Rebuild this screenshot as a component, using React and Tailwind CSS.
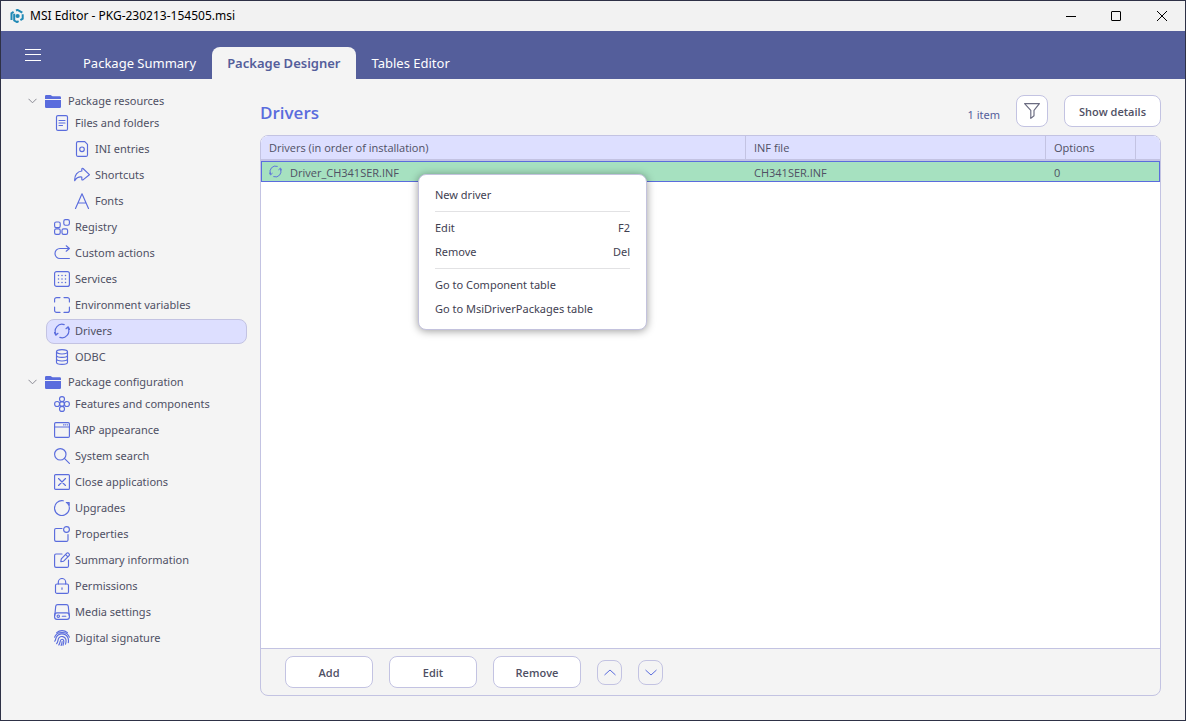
import React from "react";

function Svg({ children, className = "size-4 shrink-0" }) {
  return (
    <svg
      viewBox="0 0 16 16"
      fill="none"
      stroke="currentColor"
      strokeWidth="1.15"
      strokeLinecap="round"
      strokeLinejoin="round"
      className={className}
      aria-hidden="true"
    >
      {children}
    </svg>
  );
}

const SyncPaths = (
  <>
    <path d="M10.2 1.600A6.800 6.800 0 0 0 1.900 11M.5 9.600l1.300 2.600 2.200-1.900" />
    <path d="M5.800 14.400a6.800 6.800 0 0 0 8.300-9.400M12 5.700l2.200-1.900 1.300 2.600" />
  </>
);

const icons = {
  file: (
    <>
      <rect x="2.500" y=".6" width="11" height="14.800" rx="1.500" />
      <path d="M5 5.500h6M5 8h6M5 10.500h3.500" />
    </>
  ),
  ini: (
    <>
      <path d="M4 .6h6.800l2.700 2.700V14a1.500 1.500 0 0 1-1.500 1.400H4A1.500 1.500 0 0 1 2.500 14V2A1.500 1.500 0 0 1 4 .6Z" />
      <circle cx="8" cy="8.300" r="2.300" />
    </>
  ),
  shortcut: (
    <path d="M7.800 4V2.200Q7.800.900 9 1.500L15.400 7.700 9 12.900Q7.800 13.300 7.800 12.200V10C4.500 9.600 2.300 11 .7 13.700.3 8 3.500 4.300 7.800 4Z" />
  ),
  font: <path d="M1.500 15.500 8 .8l6.500 14.700M4.200 10h7.600" />,
  registry: (
    <>
      <rect x=".6" y="3" width="5.600" height="5.600" rx="1.600" />
      <rect x=".6" y="9.800" width="5.600" height="5.600" rx="1.600" />
      <rect x="8" y="9.800" width="5.600" height="5.600" rx="1.600" />
      <rect x="9.800" y=".6" width="5.600" height="5.600" rx="1.600" />
    </>
  ),
  action: <path d="M15.400 13.500H6A5 5 0 0 1 6 3.500h9.400M12.200.8l3.200 2.700-3.200 2.700" />,
  services: (
    <>
      <rect x=".6" y=".6" width="14.800" height="14.800" rx="2" />
      <g strokeWidth="1.500">
        <path d="M4.500 4.500h.01M8 4.500h.01M11.500 4.500h.01M4.500 8h.01M8 8h.01M11.500 8h.01M4.500 11.500h.01M8 11.500h.01M11.500 11.500h.01" />
      </g>
    </>
  ),
  env: (
    <path d="M.6 5V2.600a2 2 0 0 1 2-2H6M10 .6h3.400a2 2 0 0 1 2 2V5M15.400 10v3.400a2 2 0 0 1-2 2H10M6 15.400H2.600a2 2 0 0 1-2-2V10" />
  ),
  sync: SyncPaths,
  database: (
    <>
      <ellipse cx="8" cy="2.800" rx="5.500" ry="2.200" />
      <path d="M2.500 2.800v10.400c0 1.200 2.500 2.200 5.500 2.200s5.500-1 5.500-2.200V2.800M2.500 6.200c0 1.200 2.500 2.200 5.500 2.200s5.500-1 5.500-2.200M2.500 9.800c0 1.200 2.500 2.200 5.500 2.200s5.500-1 5.500-2.200" />
    </>
  ),
  features: (
    <>
      <circle cx="8" cy="3.100" r="2.500" />
      <circle cx="8" cy="12.900" r="2.500" />
      <circle cx="3.100" cy="8" r="2.500" />
      <circle cx="12.900" cy="8" r="2.500" />
      <circle cx="8" cy="8" r="2.400" />
    </>
  ),
  arp: (
    <>
      <rect x=".6" y=".6" width="14.800" height="14.800" rx="1.200" />
      <path d="M.6 5h14.800M9.500 2.800h.6M11.500 2.800h.3M13.300 2.800h.3" />
    </>
  ),
  search: (
    <>
      <circle cx="6.300" cy="6.300" r="5.700" />
      <path d="m10.400 10.400 5 5" />
    </>
  ),
  close: (
    <>
      <rect x=".6" y=".6" width="14.800" height="14.800" rx="1" />
      <path d="m4.500 4.500 7 7M11.500 4.500l-7 7" />
    </>
  ),
  upgrade: <path d="M9.300.8A7.400 7.400 0 1 0 13.500 3.200M12.300 2.600h2.900v3" />,
  properties: (
    <>
      <path d="M8 2.500H2A1.500 1.500 0 0 0 .6 4v10A1.500 1.500 0 0 0 2 15.400h10.500A1.500 1.500 0 0 0 14 14V8.500" />
      <circle cx="12.500" cy="3.500" r="2.900" />
    </>
  ),
  summary: (
    <>
      <path d="M8 2H2A1.500 1.500 0 0 0 .6 3.500V14A1.500 1.500 0 0 0 2 15.400h11a1.500 1.500 0 0 0 1.500-1.400V8" />
      <path d="m7.300 6.800 5.500-5.600a1.200 1.200 0 0 1 1.700 0l.6.700a1.200 1.200 0 0 1 0 1.700L9.700 9.200l-2.900.5ZM11.700 2.600l2.200 2.200" />
    </>
  ),
  lock: (
    <>
      <rect x="1.500" y="6" width="13" height="9.400" rx="1.500" />
      <path d="M4.300 6V4.200a3.700 3.700 0 0 1 7.400 0V6M8 9.700v1.600" />
    </>
  ),
  media: (
    <>
      <path d="M.8 11.500 1.700 2.400A2 2 0 0 1 3.700.6h8.600a2 2 0 0 1 2 1.800l.9 9.100" />
      <rect x=".6" y="8.800" width="14.800" height="6.600" rx="2.400" />
      <circle cx="4.300" cy="12.200" r="1.200" />
      <path d="M8.300 12.200h3.500" />
    </>
  ),
  fingerprint: (
    <path d="M2.700 2.600C5.800-.1 10.300-.1 13.400 2.600M.6 7.200c2-6.300 12.800-6.300 14.800 0M.8 11.200c1-1.200.8-2.700 1.500-4 2.300-4.500 9-4.500 11.400 0 .9 1.800 1 3.500.6 5.500M2.600 13.600c2-1.900.8-4.300 2.500-6 2-2 5.800-1.200 6.700 1.600.5 1.800.2 3.400-.3 5M4.800 15c2-2.300.7-5.800 3.200-5.800 2.600 0 1.900 3.800 1 6.100M7.100 15.500c.7-1.400 1-2.500 1-4" />
  ),
};

const resources = [
  { label: "Files and folders", icon: "file" },
  { label: "INI entries", icon: "ini", nested: true },
  { label: "Shortcuts", icon: "shortcut", nested: true },
  { label: "Fonts", icon: "font", nested: true },
  { label: "Registry", icon: "registry" },
  { label: "Custom actions", icon: "action" },
  { label: "Services", icon: "services" },
  { label: "Environment variables", icon: "env" },
  { label: "Drivers", icon: "sync", selected: true },
  { label: "ODBC", icon: "database" },
];

const configuration = [
  { label: "Features and components", icon: "features" },
  { label: "ARP appearance", icon: "arp" },
  { label: "System search", icon: "search" },
  { label: "Close applications", icon: "close" },
  { label: "Upgrades", icon: "upgrade" },
  { label: "Properties", icon: "properties" },
  { label: "Summary information", icon: "summary" },
  { label: "Permissions", icon: "lock" },
  { label: "Media settings", icon: "media" },
  { label: "Digital signature", icon: "fingerprint" },
];

function TreeGroup({ title, items }) {
  return (
    <section>
      <button type="button" className="flex h-[18px] items-center pl-[27px] text-left">
        <svg viewBox="0 0 9 6" fill="none" stroke="#8a8a94" className="h-[6px] w-[9px]" aria-hidden="true">
          <path d="m.5.8 4 4 4-4" />
        </svg>
        <svg viewBox="0 0 16 13" fill="#5a6cdd" className="mr-[7px] ml-2 h-[13px] w-4" aria-hidden="true">
          <path d="M0 4V1.200Q0 0 1.200 0H5.500L7.500 1.300H14.800Q16 1.300 16 2.500V4ZM0 5H16V11.800Q16 13 14.800 13H1.200Q0 13 0 11.800Z" />
        </svg>
        {title}
      </button>
      <ul className="flex flex-col gap-px pt-px pl-[45px]">
        {items.map((item) => (
          <li key={item.label}>
            <button
              type="button"
              className={
                "flex h-[25px] w-full items-center gap-[5px] rounded-lg border pb-px text-left " +
                (item.selected ? "border-[#c3c3e2] bg-[#dddfff] " : "border-transparent ") +
                (item.nested ? "pl-[27px]" : "pl-[7px]")
              }
            >
              <span className="text-[#5a6cdd]">
                <Svg>{icons[item.icon]}</Svg>
              </span>
              {item.label}
            </button>
          </li>
        ))}
      </ul>
    </section>
  );
}

function TitleBar() {
  return (
    <header className="flex h-[30px] shrink-0 items-center bg-[#f2f2f2] pl-[9px] text-[12px] text-black">
      <svg viewBox="0 0 14 14" fill="none" stroke="#2089b5" strokeWidth="2" className="mr-[6px] size-[14px]" aria-hidden="true">
        <path d="M1.500 11V4.200L3.600 2.800M6 1.500 7.500.900l4.800 2.700M12.700 5.200v4.500l-2.300 1.400M8.600 12.200l-1.600.9-2.800-1.600V4.800" />
        <circle cx="7.600" cy="7" r="2.100" fill="#2089b5" stroke="none" />
      </svg>
      <h1 className="flex-1">MSI Editor - PKG-230213-154505.msi</h1>
      <div className="flex text-black">
        <button type="button" aria-label="Minimize" className="flex h-[30px] w-[45px] items-center justify-center">
          <svg viewBox="0 0 10 10" stroke="currentColor" fill="none" className="size-[10px]">
            <path d="M0 5.500h10" />
          </svg>
        </button>
        <button type="button" aria-label="Maximize" className="flex h-[30px] w-[45px] items-center justify-center">
          <svg viewBox="0 0 10 10" stroke="currentColor" fill="none" className="size-[10px]">
            <rect x=".5" y=".5" width="9" height="9" rx=".5" />
          </svg>
        </button>
        <button type="button" aria-label="Close" className="flex h-[30px] w-[47px] items-center justify-center">
          <svg viewBox="0 0 10 10" stroke="currentColor" fill="none" className="size-[10px]">
            <path d="m0 0 10 10M10 0 0 10" />
          </svg>
        </button>
      </div>
    </header>
  );
}

function NavBar() {
  return (
    <nav className="flex h-12 shrink-0 items-end bg-[#545e9b] text-[13px] text-white">
      <button type="button" aria-label="Menu" className="flex h-12 w-16 items-center justify-center">
        <svg viewBox="0 0 16 12" stroke="white" className="h-3 w-4">
          <path d="M0 .5h16M0 5.500h16M0 11.500h16" />
        </svg>
      </button>
      <a href="#summary" className="flex h-8 items-center pt-0.5 pr-4 pl-[18px]">Package Summary</a>
      <a
        href="#designer"
        aria-current="page"
        className="flex h-8 items-center rounded-t-lg bg-[#f4f4f4] px-[15px] pt-0.5 font-semibold text-[#545e9b]"
      >
        Package Designer
      </a>
      <a href="#tables" className="flex h-8 items-center px-4 pt-0.5">Tables Editor</a>
    </nav>
  );
}

function MenuItem({ label, shortcut }) {
  return (
    <button type="button" role="menuitem" className="flex h-6 w-full items-center justify-between">
      <span>{label}</span>
      {shortcut && <span>{shortcut}</span>}
    </button>
  );
}

function ContextMenu() {
  return (
    <div
      role="menu"
      className="absolute top-[38px] left-[157px] w-[229px] rounded-lg border border-[#c3c2dd] bg-white px-4 py-2 text-[#3f4152] shadow-[0_1px_8px_rgba(0,0,0,0.4)]"
    >
      <MenuItem label="New driver" />
      <hr className="my-1 border-[#e2e2e4]" />
      <MenuItem label="Edit" shortcut="F2" />
      <MenuItem label="Remove" shortcut="Del" />
      <hr className="my-1 border-[#e2e2e4]" />
      <MenuItem label="Go to Component table" />
      <MenuItem label="Go to MsiDriverPackages table" />
    </div>
  );
}

function DriversTable() {
  return (
    <table className="w-full table-fixed border-separate border-spacing-0 text-left font-['Open_Sans',sans-serif]">
      <colgroup>
        <col />
        <col className="w-[300px]" />
        <col className="w-[90px]" />
        <col className="w-[24px]" />
      </colgroup>
      <thead>
        <tr className="h-[25px] bg-[#dddfff]">
          <th className="border-r border-b-2 border-[#c3c3e2] px-2 pt-0.5 font-medium">Drivers (in order of installation)</th>
          <th className="border-r border-b-2 border-[#c3c3e2] px-2 pt-0.5 font-medium">INF file</th>
          <th className="border-r border-b-2 border-[#c3c3e2] px-2 pt-0.5 font-medium">Options</th>
          <th className="border-b-2 border-[#c3c3e2]" aria-label="Spacer" />
        </tr>
      </thead>
      <tbody>
        <tr className="h-[21px] bg-[#a6e1c0] outline-1 -outline-offset-1 outline-[#5a6cdd]">
          <td className="px-2 pt-1">
            <div className="flex items-center gap-2">
              <span className="pb-1 text-[#5a6cdd]">
                <Svg className="size-[13px]">{SyncPaths}</Svg>
              </span>
              Driver_CH341SER.INF
            </div>
          </td>
          <td className="px-2 pt-1">CH341SER.INF</td>
          <td className="px-2 pt-1">0</td>
          <td />
        </tr>
      </tbody>
    </table>
  );
}

function ActionButton({ children }) {
  return (
    <button type="button" className="h-8 w-[88px] rounded-lg border border-[#c3c3e2] bg-white pt-0.5 font-semibold">
      {children}
    </button>
  );
}

function MoveButton({ label, d }) {
  return (
    <button
      type="button"
      aria-label={label}
      className="flex size-[25px] items-center justify-center rounded-lg border border-[#c3c3e2]"
    >
      <svg viewBox="0 0 12 7" fill="none" stroke="#5a6cdd" className="h-[7px] w-3">
        <path d={d} />
      </svg>
    </button>
  );
}

export default function App() {
  return (
    <div className="flex min-h-screen flex-col border border-[#2e3146] bg-[#f4f4f4] font-['Noto_Sans','Open_Sans',sans-serif] text-[11px] text-[#4f5064]">
      <TitleBar />
      <NavBar />
      <div className="flex flex-1">
        <aside className="flex w-[246px] shrink-0 flex-col gap-[3px] pt-[13px]">
          <TreeGroup title="Package resources" items={resources} />
          <TreeGroup title="Package configuration" items={configuration} />
        </aside>
        <main className="flex min-w-0 flex-1 flex-col pt-4 pr-6 pb-6 pl-[13px]">
          <div className="mb-2 flex h-8 items-center">
            <h2 className="flex-1 pt-1 font-['Open_Sans',sans-serif] text-[17px] font-semibold text-[#5a6cdd]">Drivers</h2>
            <span className="mr-4 pt-2 text-[#545e9b]">1 item</span>
            <button
              type="button"
              aria-label="Filter"
              className="mr-4 flex size-8 items-center justify-center rounded-lg border border-[#c3c3e2] bg-white text-[#6a6b80]"
            >
              <Svg>
                <path d="M.6.6h14.800L10 7.300v5.400L6.800 15.400V7.300Z" />
              </Svg>
            </button>
            <button
              type="button"
              className="h-8 w-[97px] rounded-lg border border-[#c3c3e2] bg-white pt-0.5 font-['Open_Sans',sans-serif] font-semibold"
            >
              Show details
            </button>
          </div>
          <section className="relative flex flex-1 flex-col overflow-hidden rounded-lg border border-[#c3c3e2]">
            <div className="flex-1 bg-white">
              <DriversTable />
            </div>
            <footer className="flex h-[47px] shrink-0 items-center gap-4 border-t border-[#c3c3e2] px-6 font-['Open_Sans',sans-serif]">
              <ActionButton>Add</ActionButton>
              <ActionButton>Edit</ActionButton>
              <ActionButton>Remove</ActionButton>
              <MoveButton label="Move up" d="m.5 6 5.500-5L11.500 6" />
              <MoveButton label="Move down" d="m.5 1 5.500 5L11.500 1" />
            </footer>
            <ContextMenu />
          </section>
        </main>
      </div>
    </div>
  );
}
